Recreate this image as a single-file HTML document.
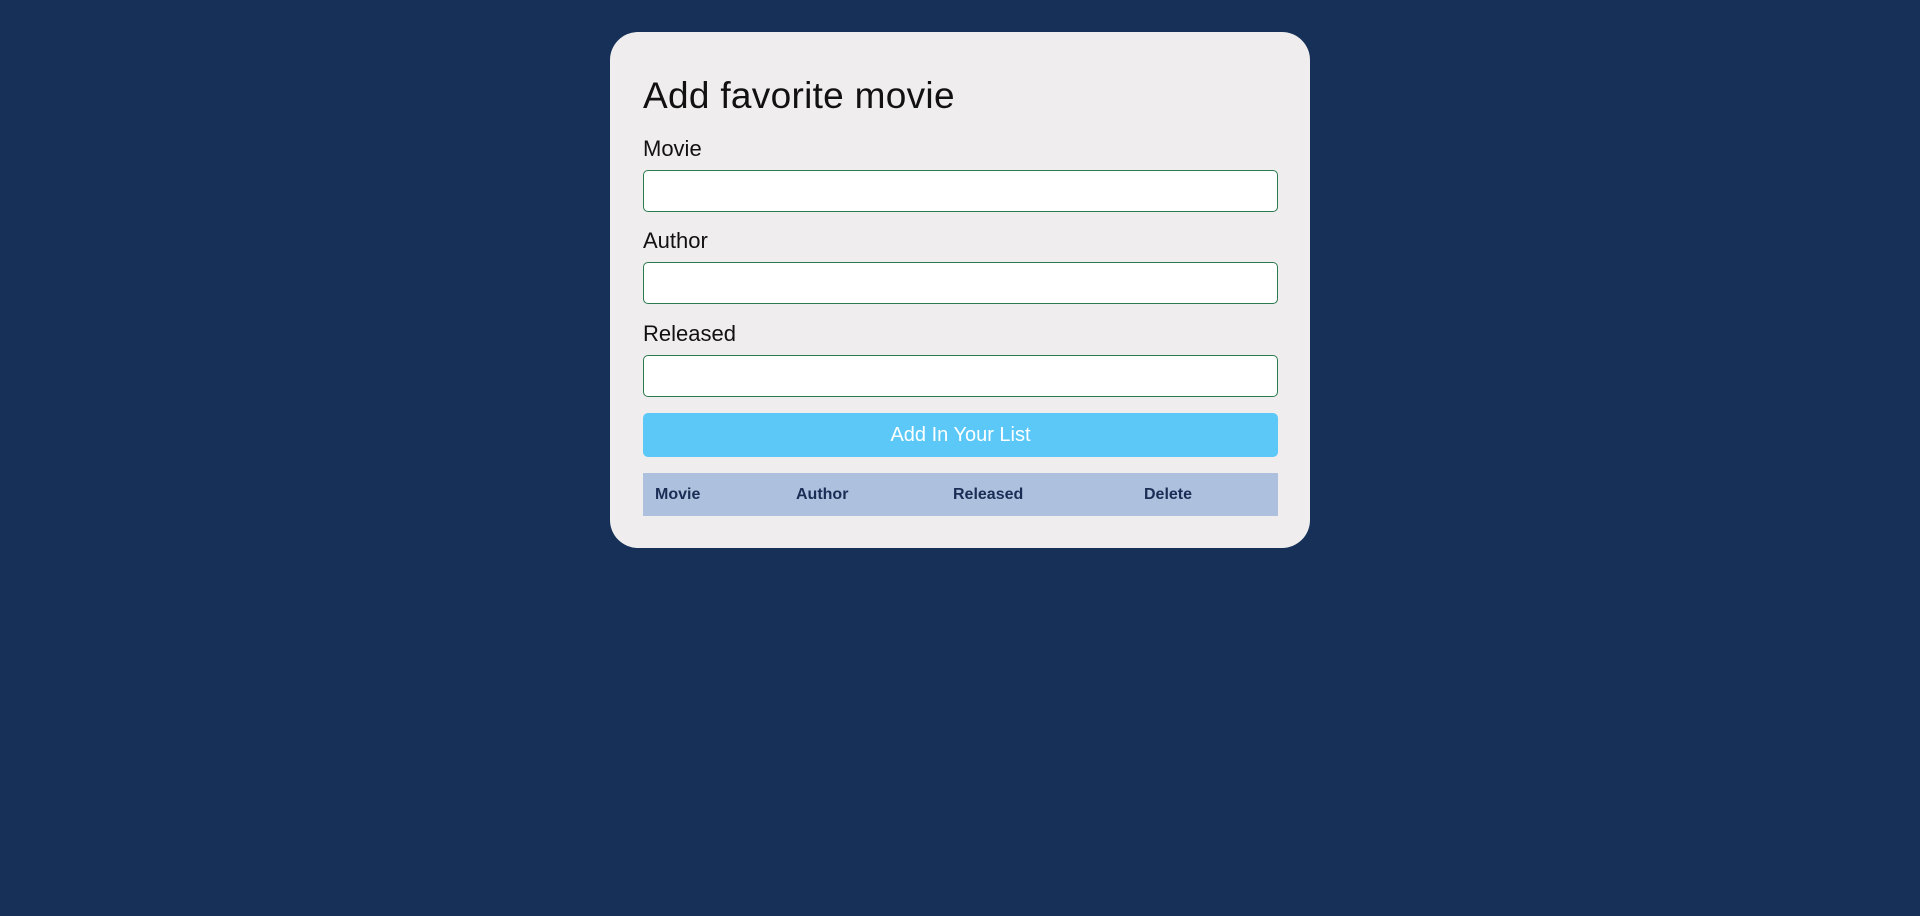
<!DOCTYPE html>
<html><head><style>
html,body{margin:0;padding:0;background:#163058;width:1920px;height:916px;overflow:hidden;font-family:"Liberation Sans",sans-serif;}
.card{position:absolute;left:610px;top:32px;width:700px;height:516px;background:#efedee;border-radius:28px;}
.t{position:absolute;left:33px;top:43px;font-size:37px;font-weight:300;color:#111;letter-spacing:0.3px;}
.l{position:absolute;left:33px;font-size:22px;color:#111;}
.i{position:absolute;left:33px;width:635px;height:42px;box-sizing:border-box;background:#fff;border:1px solid #2a7a4f;border-radius:5px;}
.b{position:absolute;left:33px;top:381px;width:635px;height:44px;background:#5bc8f7;border-radius:5px;color:#fff;font-size:20px;text-align:center;line-height:44px;}
.h{position:absolute;left:33px;top:441px;width:635px;height:43px;background:#adc1de;}
.h span{position:absolute;top:13px;font-size:16px;font-weight:bold;color:#1a2d55;}
</style></head><body>
<div class="card">
<div class="t">Add favorite movie</div>
<div class="l" style="top:104px">Movie</div>
<div class="i" style="top:138px"></div>
<div class="l" style="top:196px">Author</div>
<div class="i" style="top:230px"></div>
<div class="l" style="top:289px">Released</div>
<div class="i" style="top:323px"></div>
<div class="b">Add In Your List</div>
<div class="h"><span style="left:12px">Movie</span><span style="left:153px">Author</span><span style="left:310px">Released</span><span style="left:501px">Delete</span></div>
</div>
</body></html>
